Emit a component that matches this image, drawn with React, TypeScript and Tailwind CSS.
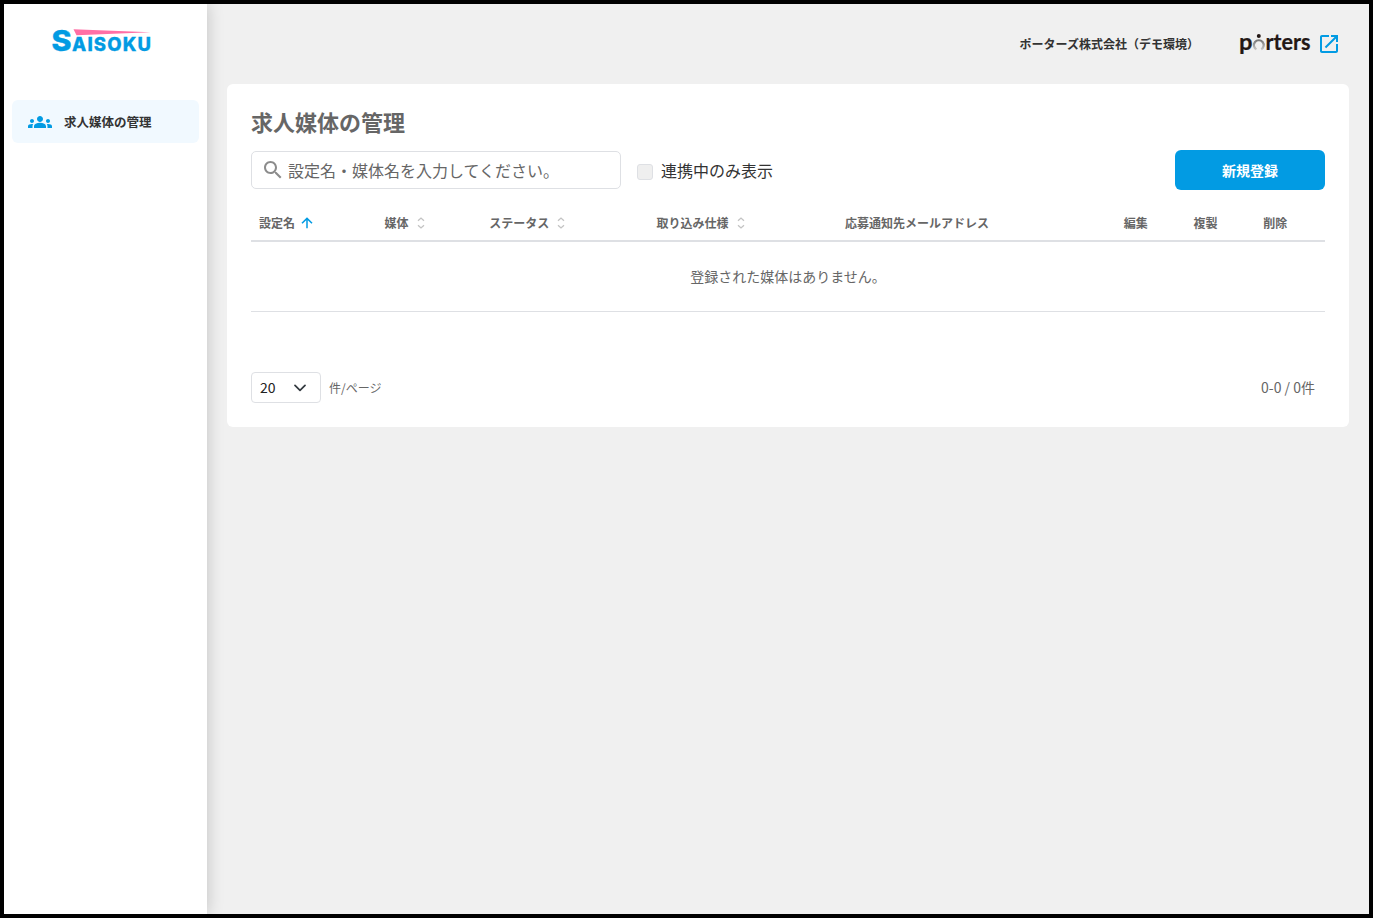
import React from "react";

interface Column {
    label: string;
    width: string;
    sort?: "asc" | "none";
}

const columns: Column[] = [
    { label: "設定名", width: "w-[125.5px]", sort: "asc" },
    { label: "媒体", width: "w-[104.75px]", sort: "none" },
    { label: "ステータス", width: "w-[167.25px]", sort: "none" },
    { label: "取り込み仕様", width: "w-[188.5px]", sort: "none" },
    { label: "応募通知先メールアドレス", width: "w-[278.75px]" },
    { label: "編集", width: "w-[69.75px]" },
    { label: "複製", width: "w-[69.75px]" },
    { label: "削除", width: "w-[69.75px]" },
];

const SaisokuLogo = () => (
    <svg width="100" height="24" viewBox="0 0 100 24" className="block overflow-visible">
        <path d="M21.5 1.2 L98.5 4.3 L24.5 7.2 Z" fill="#ff6fa5" />
        <g fill="#029be3" stroke="#029be3" fontFamily="Inter, sans-serif" fontWeight="800">
            <text x="-0.5" y="22.6" fontSize="28.5" strokeWidth="0.4" textLength="20" lengthAdjust="spacingAndGlyphs">
                S
            </text>
            <text x="20" y="22.8" fontSize="18.5" strokeWidth="0.3" textLength="79" lengthAdjust="spacing">
                AISOKU
            </text>
        </g>
    </svg>
);

const PortersLogo = () => (
    <svg width="70" height="22" viewBox="0 0 70 22" className="block overflow-visible">
        <defs>
            <linearGradient id="ring" x1="0" y1="0" x2="0" y2="1">
                <stop offset="0" stopColor="#777" />
                <stop offset="1" stopColor="#c4c4c4" />
            </linearGradient>
        </defs>
        <g fill="#231815" stroke="#231815" strokeWidth="0.2" fontFamily="Lato, sans-serif" fontWeight="700" fontSize="22">
            <text x="-1" y="17.3" textLength="13.5" lengthAdjust="spacingAndGlyphs">
                p
            </text>
            <text x="25.5" y="17.3" textLength="45" lengthAdjust="spacingAndGlyphs">
                rters
            </text>
        </g>
        <path d="M16.4 16.4 A4.9 4.9 0 1 1 21.2 16.4" fill="none" stroke="url(#ring)" strokeWidth="2.2" />
        <circle cx="18.8" cy="3" r="2" fill="#231815" />
    </svg>
);

const GroupsIcon = () => (
    <svg width="24" height="24" viewBox="0 0 24 24" fill="#029be3">
        <path d="M12 12.75c1.63 0 3.07.39 4.24.9 1.08.48 1.76 1.56 1.76 2.73V18H6v-1.61c0-1.18.68-2.26 1.76-2.73 1.17-.52 2.61-.91 4.24-.91zM4 13c1.1 0 2-.9 2-2s-.9-2-2-2-2 .9-2 2 .9 2 2 2zm1.13 1.1c-.37-.06-.74-.1-1.13-.1-.99 0-1.93.21-2.78.58C.48 14.9 0 15.62 0 16.43V18h4.5v-1.61c0-.83.23-1.61.63-2.29zM20 13c1.1 0 2-.9 2-2s-.9-2-2-2-2 .9-2 2 .9 2 2 2zm4 3.43c0-.81-.48-1.53-1.22-1.85-.85-.37-1.79-.58-2.78-.58-.39 0-.76.04-1.13.1.4.68.63 1.46.63 2.29V18H24v-1.57zM12 6c1.66 0 3 1.34 3 3s-1.34 3-3 3-3-1.34-3-3 1.34-3 3-3z" />
    </svg>
);

const ExternalIcon = () => (
    <svg width="24" height="24" viewBox="0 0 24 24" fill="#029be3">
        <path d="M19 19H5V5h7V3H5c-1.11 0-2 .9-2 2v14c0 1.1.89 2 2 2h14c1.1 0 2-.9 2-2v-7h-2v7zM14 3v2h3.59l-9.83 9.83 1.41 1.41L19 6.41V10h2V3h-7z" />
    </svg>
);

const SearchIcon = () => (
    <svg width="24" height="24" viewBox="0 0 24 24" fill="#8c8c8c">
        <path d="M15.5 14h-.79l-.28-.27C15.41 12.59 16 11.11 16 9.5 16 5.91 13.09 3 9.5 3S3 5.91 3 9.5 5.91 16 9.5 16c1.61 0 3.09-.59 4.23-1.57l.27.28v.79l5 4.99L20.49 19l-4.99-5zm-6 0C7.01 14 5 11.99 5 9.5S7.01 5 9.5 5 14 7.01 14 9.5 11.99 14 9.5 14z" />
    </svg>
);

const SortIcon = ({ sort }: { sort: "asc" | "none" }) =>
    sort === "asc" ? (
        <svg width="12" height="12" viewBox="0 0 12 12" fill="none" stroke="#029be3" strokeWidth="1.5" className="ml-1.5">
            <path d="M6 11.3V1.6M1 6.3L6 1.4l5 4.9" />
        </svg>
    ) : (
        <svg width="8" height="12" viewBox="0 0 8 12" fill="none" stroke="#c3c3c3" strokeWidth="1.3" className="ml-2">
            <path d="M1 3.7L4 1l3 2.7M1 8.3L4 11l3-2.7" />
        </svg>
    );

const Sidebar = () => (
    <aside className="z-10 w-[203px] shrink-0 bg-white shadow-[0_0_16px_rgba(0,0,0,0.2)]">
        <div className="pt-6 pl-12">
            <SaisokuLogo />
        </div>
        <nav className="mt-12 pr-2 pl-2">
            <a className="flex h-[43px] items-center gap-3 rounded-md bg-[#f1f9ff] pl-4 text-[12.5px] font-bold text-[#333]">
                <GroupsIcon />
                <span className="pt-0.5">求人媒体の管理</span>
            </a>
        </nav>
    </aside>
);

const Header = () => (
    <header className="flex h-20 items-center justify-end pr-2">
        <span className="text-xs font-bold text-[#333]">ポーターズ株式会社（デモ環境）</span>
        <div className="ml-[41px] flex items-center">
            <PortersLogo />
            <div className="ml-[7px]">
                <ExternalIcon />
            </div>
        </div>
    </header>
);

const MediaTable = () => (
    <div className="mt-4">
        <div className="flex h-9 items-center border-b-2 border-[#dee0e4] text-xs font-bold text-[#666]">
            {columns.map((column) => (
                <div key={column.label} className={`flex shrink-0 items-center pl-2 ${column.width}`}>
                    <span>{column.label}</span>
                    {column.sort && <SortIcon sort={column.sort} />}
                </div>
            ))}
        </div>
        <div className="flex h-[70px] items-center justify-center border-b border-[#dee0e4] pb-0.5 text-sm text-[#666]">
            登録された媒体はありません。
        </div>
    </div>
);

const Pagination = () => (
    <div className="mt-[60px] flex items-center text-[#666]">
        <div className="flex h-[31px] w-[70px] items-center justify-between rounded border border-[#dee0e4] pr-3.5 pl-2 text-sm text-[#222]">
            <span className="pb-0.5">20</span>
            <svg width="12" height="8" viewBox="0 0 12 8" fill="none" stroke="#343a40" strokeWidth="1.7" strokeLinecap="round" strokeLinejoin="round">
                <path d="M1 1.4l5 5 5-5" />
            </svg>
        </div>
        <span className="ml-2 text-xs">件/ページ</span>
        <span className="mr-2.5 ml-auto pb-0.5 text-sm">0-0 / 0件</span>
    </div>
);

const App: React.FC = () => {
    return (
        <div className="flex h-screen overflow-hidden border-4 border-black bg-[#f0f0f0] font-['Noto_Sans_CJK_JP',sans-serif]">
            <Sidebar />
            <div className="flex-1 pr-5 pl-5">
                <Header />
                <main className="h-[343px] rounded-md bg-white px-6 pt-[21px]">
                    <h1 className="text-[22px] leading-8 font-bold text-[#666]">求人媒体の管理</h1>
                    <div className="mt-[13px] flex h-10 items-center">
                        <div className="flex h-[38px] w-[370px] items-center rounded-[5px] border border-[#dee0e4] pl-[9px] text-base text-[#666]">
                            <SearchIcon />
                            <span className="ml-[3px]">設定名・媒体名を入力してください。</span>
                        </div>
                        <label className="ml-4 flex items-center gap-2 text-base text-[#333]">
                            <span className="mt-[3px] size-4 rounded-[3px] border border-[#dee0e4] bg-[#efefef]" />
                            連携中のみ表示
                        </label>
                        <button className="ml-auto h-10 w-[150px] rounded-md bg-[#029be3] text-sm font-bold text-white">
                            新規登録
                        </button>
                    </div>
                    <MediaTable />
                    <Pagination />
                </main>
            </div>
        </div>
    );
};

export default App;
